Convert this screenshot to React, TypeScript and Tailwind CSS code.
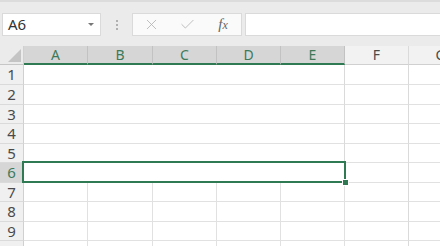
import React from "react";
import { X, Check } from "lucide-react";

const cols = [
  { name: "A", w: "w-[64px]" },
  { name: "B", w: "w-[65px]" },
  { name: "C", w: "w-[64px]" },
  { name: "D", w: "w-[64px]" },
  { name: "E", w: "w-[64px]" },
  { name: "F", w: "w-[64px]" },
  { name: "G", w: "w-[64px]" },
];

// row heights measured off the sheet (bottom gridline included)
const rows = [
  { n: 1, h: "h-[20px]" },
  { n: 2, h: "h-[20px]" },
  { n: 3, h: "h-[19px]" },
  { n: 4, h: "h-[20px]" },
  { n: 5, h: "h-[19px]" },
  { n: 6, h: "h-[20px]" },
  { n: 7, h: "h-[19px]" },
  { n: 8, h: "h-[20px]" },
  { n: 9, h: "h-[19px]" },
  { n: 10, h: "h-[20px]" },
];

const App: React.FC = () => {
  return (
    <div className="w-[440px] h-[246px] overflow-hidden bg-[#ebebeb] font-['Noto_Sans',sans-serif] select-none">
      {/* formula bar */}
      <div className="h-[46px] border-t-2 border-[#dcdcdc] flex items-start pt-[11px]">
        <div className="ml-[2px] w-[99px] h-[23px] bg-white border border-[#dadada] flex items-center justify-between pl-[5px] pr-[6px]">
          <span className="text-[15px] text-[#333] leading-none">A6</span>
          <span className="w-0 h-0 border-l-[3px] border-r-[3px] border-t-[3px] border-l-transparent border-r-transparent border-t-[#777]" />
        </div>
        <div className="w-[31px] h-[23px] flex flex-col items-center justify-center gap-[2px]">
          <span className="w-[2px] h-[2px] bg-[#b0b0b0]" />
          <span className="w-[2px] h-[2px] bg-[#b0b0b0]" />
          <span className="w-[2px] h-[2px] bg-[#b0b0b0]" />
        </div>
        <div className="w-[110px] h-[23px] bg-[#fafafa] border border-[#dadada] flex items-center">
          <div className="w-[36px] flex justify-center">
            <X size={17} strokeWidth={1.2} className="text-[#b4b4b4]" />
          </div>
          <div className="w-[36px] flex justify-center">
            <Check size={17} strokeWidth={1.2} className="text-[#b4b4b4]" />
          </div>
          <div className="w-[36px] flex justify-center">
            <span className="font-['Liberation_Serif',serif] italic text-[15px] text-[#666] leading-none">
              f<span className="text-[12px]">x</span>
            </span>
          </div>
        </div>
        <div className="ml-[3px] flex-1 h-[23px] bg-white border border-[#dadada] border-r-0" />
      </div>

      {/* sheet */}
      <div className="bg-white">
        {/* column headers */}
        <div className="flex h-[19px]">
          <div className="w-[24px] shrink-0 bg-[#ebebeb] border-r border-[#d0d0d0] border-b border-b-[#c6c6c6] relative">
            <svg className="absolute right-[2px] bottom-[2px]" width="13" height="13" viewBox="0 0 13 13">
              <polygon points="13,0 13,13 0,13" fill="#c4c4c4" />
            </svg>
          </div>
          {cols.map((c, i) => {
            const sel = i < 5;
            return (
              <div
                key={c.name}
                className={`${c.w} shrink-0 flex items-center justify-center text-[14px] leading-none ${
                  sel
                    ? "bg-[#d6d6d6] text-[#3d7a5a] border-b-2 border-[#2f7a52] border-r border-r-[#c2c2c2]"
                    : "bg-[#f2f2f2] text-[#4a4a4a] border-b border-[#d0d0d0] border-r border-r-[#dadada]"
                }`}
              >
                {c.name}
              </div>
            );
          })}
        </div>

        {rows.map((r) => {
          const isSel = r.n === 6;
          const merged = r.n <= 6;
          return (
            <div key={r.n} className={`flex ${r.h}`}>
              <div
                className={`w-[24px] shrink-0 flex items-center justify-center text-[15px] leading-none border-r border-[#d0d0d0] border-b border-b-[#dadada] ${
                  isSel ? "bg-[#d6d6d6] text-[#3d7a5a]" : "bg-[#f0f0f0] text-[#4a4a4a]"
                }`}
              >
                {r.n}
              </div>
              {merged ? (
                <div className="w-[321px] shrink-0 border-b border-[#e1e1e1] border-r border-r-[#dadada] relative">
                  {isSel && (
                    <div className="absolute left-[-2px] top-[-2px] right-[-2px] bottom-[-1px] border-2 border-[#2f7a52] z-10">
                      <div className="absolute right-[-4px] bottom-[-4px] w-[5px] h-[5px] bg-[#2f7a52] outline outline-1 outline-white" />
                    </div>
                  )}
                </div>
              ) : (
                cols.slice(0, 5).map((c) => (
                  <div key={c.name} className={`${c.w} shrink-0 border-b border-[#e1e1e1] border-r border-r-[#e1e1e1]`} />
                ))
              )}
              {cols.slice(5).map((c) => (
                <div key={c.name} className={`${c.w} shrink-0 border-b border-[#e1e1e1] border-r border-r-[#dadada]`} />
              ))}
            </div>
          );
        })}
      </div>
    </div>
  );
};

export default App;
